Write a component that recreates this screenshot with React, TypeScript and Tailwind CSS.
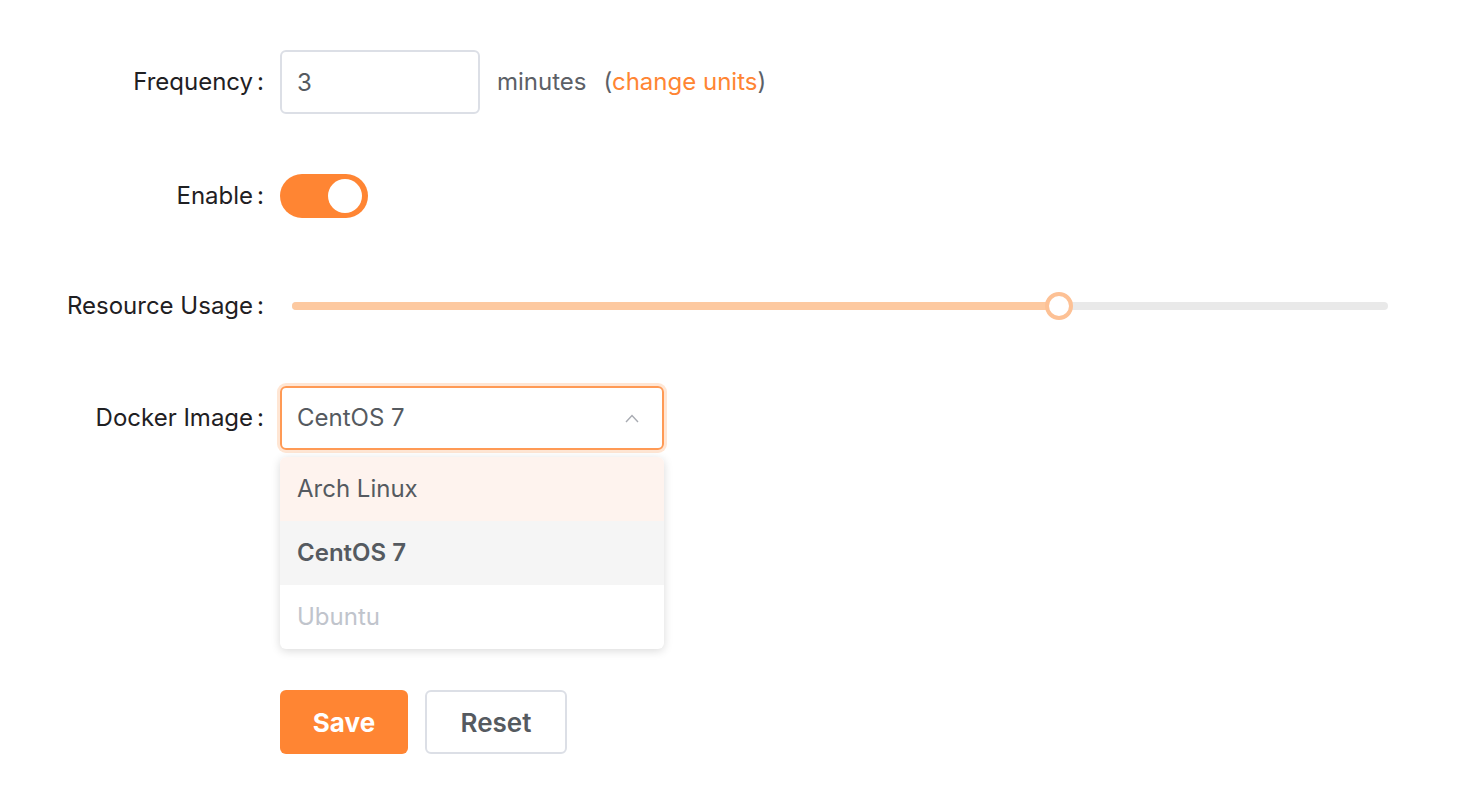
import { useState } from "react";

const options = ["Arch Linux", "CentOS 7", "Ubuntu"];

function Label({ text }: { text: string }) {
  return (
    <div className="w-[264px] shrink-0 text-right text-[24px] text-[#1f2023]">
      {text}
      <span className="ml-[4px]">:</span>
    </div>
  );
}

export default function App() {
  const [enabled, setEnabled] = useState(true);
  const [usage] = useState(70);

  return (
    <div className="min-h-screen bg-white pt-[50px] font-['Inter',sans-serif]">
      {/* Frequency */}
      <div className="flex items-center h-[64px]">
        <Label text="Frequency" />
        <div className="ml-4 flex items-center">
          <input
            defaultValue="3"
            className="w-[200px] h-[64px] rounded-[6px] border-2 border-[#dcdfe6] px-[15px] text-[24px] text-[#555a60] outline-none"
          />
          <span className="ml-[17px] text-[24px] text-[#5c6066]">minutes</span>
          <span className="ml-[17px] text-[24px] text-[#5c6066]">
            (<a className="text-[#ff8533]">change units</a>)
          </span>
        </div>
      </div>

      {/* Enable */}
      <div className="flex items-center h-[64px] mt-[50px]">
        <Label text="Enable" />
        <button
          onClick={() => setEnabled(!enabled)}
          className={`ml-4 w-[88px] h-[44px] rounded-full flex items-center px-[6px] ${
            enabled ? "bg-[#ff8533] justify-end" : "bg-[#dcdfe6] justify-start"
          }`}
        >
          <span className="block w-[34px] h-[34px] rounded-full bg-white" />
        </button>
      </div>

      {/* Resource Usage */}
      <div className="flex items-center h-[64px] mt-[46px]">
        <Label text="Resource Usage" />
        <div className="ml-4 flex-1 mr-[86px] pl-[12px]">
          <div className="relative h-[8px] rounded-full bg-[#e9e9e9]">
            <div
              className="absolute left-0 top-0 h-full rounded-full bg-[#fdc9a0]"
              style={{ width: `${usage}%` }}
            />
            <div
              className="absolute top-1/2 w-[28px] h-[28px] -translate-x-1/2 -translate-y-1/2 rounded-full border-[4px] border-[#fdc195] bg-white"
              style={{ left: `${usage}%` }}
            />
          </div>
        </div>
      </div>

      {/* Docker Image */}
      <div className="flex items-center h-[64px] mt-[48px]">
        <Label text="Docker Image" />
        <div className="ml-4 relative">
          <div className="w-[384px] h-[64px] rounded-[6px] border-2 border-[#ff9a55] ring-[3px] ring-[#ffe6d4] flex items-center justify-between px-[15px]">
            <span className="text-[24px] text-[#555a60]">CentOS 7</span>
            <svg width="14" height="9" viewBox="0 0 14 9" className="mr-[8px]" fill="none">
              <path d="M1 8 L7 1.5 L13 8" stroke="#a8abb2" strokeWidth="1.4" />
            </svg>
          </div>
          <div className="absolute left-0 top-[71px] w-[384px] rounded-[6px] bg-white shadow-[0_2px_10px_rgba(0,0,0,0.15)] overflow-hidden z-10">
            {options.map((o) => (
              <div
                key={o}
                className={`h-[64px] flex items-center px-[17px] text-[24px] ${
                  o === "Arch Linux"
                    ? "bg-[#fef3ee] text-[#555a60]"
                    : o === "CentOS 7"
                    ? "bg-[#f5f5f5] text-[#555a60] font-semibold"
                    : "text-[#c0c4cc]"
                }`}
              >
                {o}
              </div>
            ))}
          </div>
        </div>
      </div>

      {/* Actions */}
      <div className="flex items-center mt-[240px] pl-[280px] gap-[17px]">
        <button className="w-[128px] h-[64px] rounded-[6px] bg-[#ff8533] text-white text-[26px] font-bold">
          Save
        </button>
        <button className="w-[142px] h-[64px] rounded-[6px] border-2 border-[#dcdfe6] bg-white text-[#555a60] text-[26px] font-semibold">
          Reset
        </button>
      </div>
    </div>
  );
}
